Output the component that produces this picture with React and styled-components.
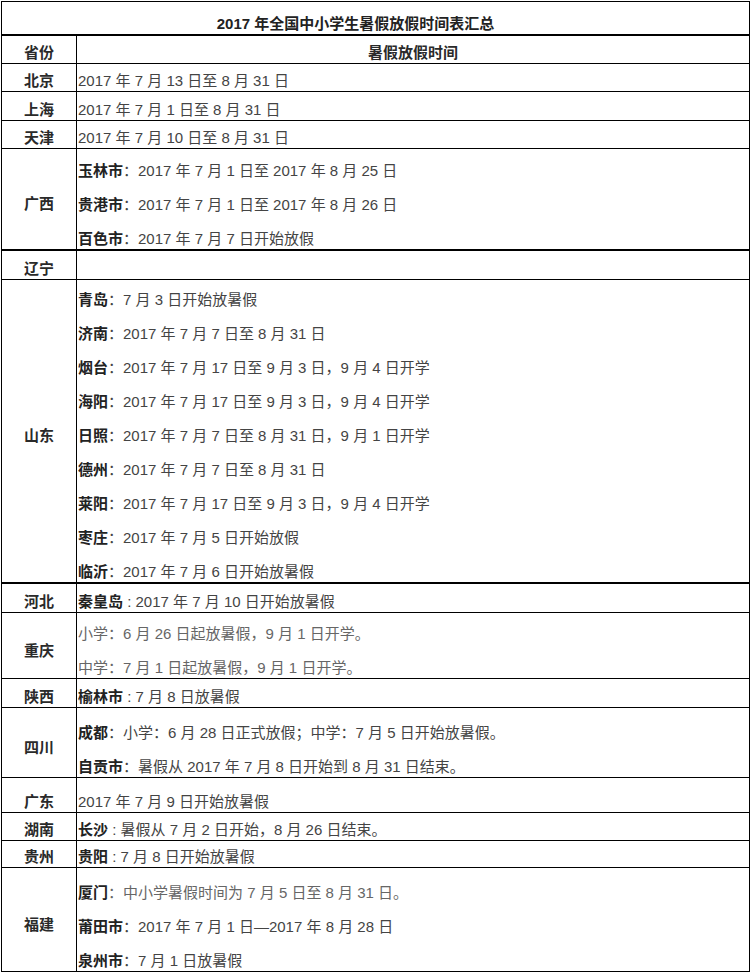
import React from "react";
import styled, { createGlobalStyle } from "styled-components";

const GlobalStyle = createGlobalStyle`
  html, body {
    margin: 0;
    padding: 0;
    background: #fff;
  }
  body {
    font-family: "Liberation Sans", Arial, "Noto Sans CJK SC", sans-serif;
  }
`;

// each province: label, row height, thick bottom line, lines of text
const provinces = [
  { name: "北京", h: 28, lines: [{ text: "2017 年 7 月 13 日至 8 月 31 日" }] },
  { name: "上海", h: 29, lines: [{ text: "2017 年 7 月 1 日至 8 月 31 日" }] },
  { name: "天津", h: 28, lines: [{ text: "2017 年 7 月 10 日至 8 月 31 日" }] },
  {
    name: "广西",
    h: 102,
    thick: true,
    lines: [
      { place: "玉林市", sep: "：", text: "2017 年 7 月 1 日至 2017 年 8 月 25 日" },
      { place: "贵港市", sep: "：", text: "2017 年 7 月 1 日至 2017 年 8 月 26 日" },
      { place: "百色市", sep: "：", text: "2017 年 7 月 7 日开始放假" },
    ],
  },
  { name: "辽宁", h: 29, lines: [] },
  {
    name: "山东",
    h: 304,
    thick: true,
    lines: [
      { place: "青岛", sep: "：", text: "7 月 3 日开始放暑假" },
      { place: "济南", sep: "：", text: "2017 年 7 月 7 日至 8 月 31 日" },
      { place: "烟台", sep: "：", text: "2017 年 7 月 17 日至 9 月 3 日，9 月 4 日开学" },
      { place: "海阳", sep: "：", text: "2017 年 7 月 17 日至 9 月 3 日，9 月 4 日开学" },
      { place: "日照", sep: "：", text: "2017 年 7 月 7 日至 8 月 31 日，9 月 1 日开学" },
      { place: "德州", sep: "：", text: "2017 年 7 月 7 日至 8 月 31 日" },
      { place: "莱阳", sep: "：", text: "2017 年 7 月 17 日至 9 月 3 日，9 月 4 日开学" },
      { place: "枣庄", sep: "：", text: "2017 年 7 月 5 日开始放假" },
      { place: "临沂", sep: "：", text: "2017 年 7 月 6 日开始放暑假" },
    ],
  },
  { name: "河北", h: 29, lines: [{ place: "秦皇岛", sep: " : ", text: "2017 年 7 月 10 日开始放暑假" }] },
  {
    name: "重庆",
    h: 66,
    lines: [
      { text: "小学：6 月 26 日起放暑假，9 月 1 日开学。", light: true },
      { text: "中学：7 月 1 日起放暑假，9 月 1 日开学。", light: true },
    ],
  },
  { name: "陕西", h: 29, lines: [{ place: "榆林市", sep: " : ", text: "7 月 8 日放暑假" }] },
  {
    name: "四川",
    h: 70,
    lines: [
      { place: "成都", sep: "：", text: "小学：6 月 28 日正式放假；中学：7 月 5 日开始放暑假。" },
      { place: "自贡市", sep: "：", text: "暑假从 2017 年 7 月 8 日开始到 8 月 31 日结束。" },
    ],
  },
  { name: "广东", h: 35, lines: [{ text: "2017 年 7 月 9 日开始放暑假" }] },
  { name: "湖南", h: 28, lines: [{ place: "长沙", sep: " : ", text: "暑假从 7 月 2 日开始，8 月 26 日结束。" }] },
  { name: "贵州", h: 27, lines: [{ place: "贵阳", sep: " : ", text: "7 月 8 日开始放暑假" }] },
  {
    name: "福建",
    h: 104,
    lines: [
      { place: "厦门", sep: "：", text: "中小学暑假时间为 7 月 5 日至 8 月 31 日。", light: true },
      { place: "莆田市", sep: "：", text: "2017 年 7 月 1 日—2017 年 8 月 28 日" },
      { place: "泉州市", sep: "：", text: "7 月 1 日放暑假" },
    ],
  },
];

const App = () => {
  return (
    <>
      <GlobalStyle />
      <Sheet>
        <TitleRow>
          <Title>2017 年全国中小学生暑假放假时间表汇总</Title>
        </TitleRow>
        <Row h={28}>
          <LabelCell>省份</LabelCell>
          <HeadCell>暑假放假时间</HeadCell>
        </Row>
        {provinces.map((p) => (
          <Row key={p.name} h={p.h} thick={p.thick}>
            <LabelCell multi={p.lines.length > 1}>{p.name}</LabelCell>
            <ContentCell>
              {p.lines.map((l, i) => (
                <Line key={i} light={l.light}>
                  {l.place && <Place>{l.place}</Place>}
                  {l.sep}
                  {l.text}
                </Line>
              ))}
            </ContentCell>
          </Row>
        ))}
      </Sheet>
    </>
  );
};

const Sheet = styled.div`
  box-sizing: border-box;
  width: 749px;
  margin: 1px 0 0 1px;
  border: 1px solid #000;
  border-bottom: 0;
  font-size: 15px;
  color: #333;
`;

const TitleRow = styled.div`
  box-sizing: border-box;
  height: 34px;
  border-bottom: 2px solid #000;
  display: flex;
  align-items: flex-end;
  justify-content: center;
  padding: 0 40px 1px 0;
`;

const Title = styled.div`
  font-weight: 700;
  line-height: 18px;
  color: #222;
`;

const Row = styled.div`
  box-sizing: border-box;
  display: grid;
  grid-template-columns: 75px 1fr;
  height: ${(p) => p.h}px;
  border-bottom: ${(p) => (p.thick ? 2 : 1)}px solid #000;
`;

const LabelCell = styled.div`
  box-sizing: border-box;
  border-right: 1px solid #000;
  display: flex;
  justify-content: center;
  align-items: ${(p) => (p.multi ? "center" : "flex-end")};
  padding: ${(p) => (p.multi ? "10px 0 0" : "0 0 1px")};
  line-height: 18px;
  font-weight: 700;
  color: #2a2a2a;
`;

const HeadCell = styled.div`
  display: flex;
  justify-content: center;
  align-items: flex-end;
  padding-bottom: 1px;
  line-height: 18px;
  font-weight: 700;
  color: #2a2a2a;
`;

const ContentCell = styled.div`
  display: flex;
  flex-direction: column;
  justify-content: flex-end;
  gap: 15px;
  padding-left: 1px;
  overflow: hidden;
`;

const Line = styled.div`
  line-height: 18px;
  padding-bottom: 1px;
  white-space: nowrap;
  color: ${(p) => (p.light ? "#666" : "#444")};
`;

const Place = styled.span`
  font-weight: 700;
  color: #222;
`;

export default App;
